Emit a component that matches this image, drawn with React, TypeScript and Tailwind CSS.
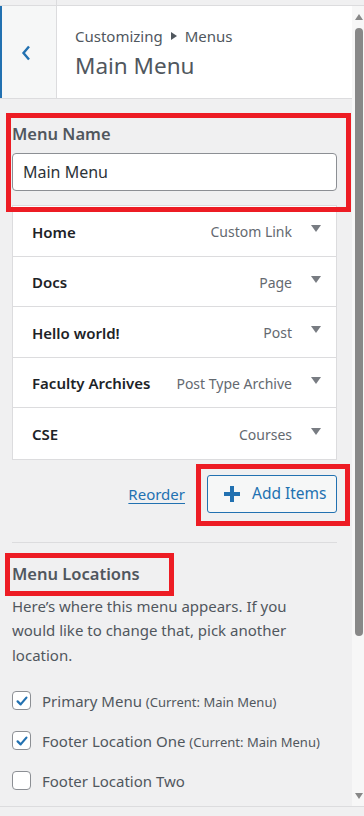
import React from "react";

const items = [
  { title: "Home", type: "Custom Link" },
  { title: "Docs", type: "Page" },
  { title: "Hello world!", type: "Post" },
  { title: "Faculty Archives", type: "Post Type Archive" },
  { title: "CSE", type: "Courses" },
];

function Check({ checked }: { checked: boolean }) {
  return (
    <span className="w-[19px] h-[19px] rounded-[4px] border border-[#8c8f94] bg-white flex items-center justify-center shrink-0">
      {checked && (
        <svg width="16" height="16" viewBox="0 0 20 20">
          <path d="M4.5 10.5 L8.3 14.2 L15.5 5.8" fill="none" stroke="#2271b1" strokeWidth="2.8" strokeLinecap="round" strokeLinejoin="round" />
        </svg>
      )}
    </span>
  );
}

export default function App() {
  return (
    <div
      className="w-[364px] h-[816px] bg-[#f0f0f1] flex flex-col overflow-hidden relative"
      style={{ fontFamily: '"Noto Sans", "Open Sans", sans-serif' }}
    >
      {/* top strip */}
      <div className="h-[6px] shrink-0 border-b border-[#dcdcde] flex">
        <div className="w-[57px] border-r border-[#dcdcde]" />
      </div>

      {/* middle */}
      <div className="h-[800px] shrink-0 flex">
        <div className="w-[352px] flex flex-col">
          {/* header */}
          <div className="h-[93px] shrink-0 bg-white border-b border-[#dcdcde] flex">
            <div className="w-[57px] shrink-0 bg-[#f6f7f7] border-l-[2px] border-l-[#2271b1] border-r border-r-[#dcdcde] flex items-center justify-center pr-[6px] pt-[1px]">
              <svg width="12" height="16" viewBox="0 0 12 16">
                <path d="M9 1.5 L3.5 8 L9 14.5" fill="none" stroke="#2271b1" strokeWidth="2.4" strokeLinejoin="miter" />
              </svg>
            </div>
            <div className="flex flex-col pl-[18px] pt-[19px]">
              <div className="text-[15px] leading-[22px] text-[#50575e] flex items-center">
                Customizing
                <svg width="6" height="8" viewBox="0 0 6 8" className="mx-[8px]">
                  <path d="M0 0 L6 4 L0 8 Z" fill="#50575e" />
                </svg>
                Menus
              </div>
              <div className="text-[22.5px] leading-[30px] mt-[4px] font-normal text-[#50575e]">Main Menu</div>
            </div>
          </div>

          {/* body */}
          <div className="pl-[12px] pr-[15px] flex flex-col">
            <div className="mt-[24px] text-[16.5px] leading-[22px] font-semibold text-[#50575e]">Menu Name</div>
            <div className="mt-[8px] h-[38px] rounded-[4px] border border-[#8c8f94] bg-white flex items-center px-[10px] text-[16px] text-[#2c3338]">
              Main Menu
            </div>

            <div className="mt-[14px] bg-white border border-[#dcdcde] flex flex-col">
              {items.map((it, i) => (
                <div
                  key={it.title}
                  className={`h-[50.6px] flex items-center pl-[19px] pr-[15px] pt-[2px] ${i < items.length - 1 ? "border-b border-[#dcdcde]" : ""}`}
                >
                  <span className="text-[15px] font-semibold text-[#1d2327] flex-1">{it.title}</span>
                  <span className="text-[14px] text-[#646970]">{it.type}</span>
                  <svg width="10" height="7" viewBox="0 0 10 7" className="ml-[19px] mb-[6px]">
                    <path d="M0 0 L10 0 L5 7 Z" fill="#787c82" />
                  </svg>
                </div>
              ))}
            </div>

            <div className="mt-[15px] flex items-center justify-end gap-[22px]">
              <span className="text-[15px] text-[#2271b1] underline underline-offset-[3px]">Reorder</span>
              <div className="h-[38px] w-[130px] rounded-[3px] border border-[#2271b1] bg-[#f6f7f7] flex items-center pl-[15px] text-[15.5px] text-[#2271b1]">
                <svg width="18" height="18" viewBox="0 0 18 18" className="mr-[11px]">
                  <path d="M7 1 H11 V7 H17 V11 H11 V17 H7 V11 H1 V7 H7 Z" fill="#2271b1" />
                </svg>
                Add Items
              </div>
            </div>

            <div className="mt-[29px] h-px bg-[#dcdcde]" />

            <div className="mt-[20px] text-[16.5px] leading-[22px] font-semibold text-[#50575e]">Menu Locations</div>
            <div className="mt-[9px] text-[15px] leading-[24.5px] text-[#50575e] pr-[20px]">
              Here’s where this menu appears. If you would like to change that, pick another location.
            </div>

            <div className="mt-[24px] flex flex-col gap-[21px]">
              <div className="flex items-center h-[19px]">
                <Check checked />
                <span className="ml-[11px] text-[15px] text-[#50575e]">
                  Primary Menu <span className="text-[13px]">(Current: Main Menu)</span>
                </span>
              </div>
              <div className="flex items-center h-[19px]">
                <Check checked />
                <span className="ml-[11px] text-[15px] text-[#50575e]">
                  Footer Location One <span className="text-[13px]">(Current: Main Menu)</span>
                </span>
              </div>
              <div className="flex items-center h-[19px]">
                <Check checked={false} />
                <span className="ml-[11px] text-[15px] text-[#50575e]">Footer Location Two</span>
              </div>
            </div>
          </div>
        </div>

        {/* scrollbar */}
        <div className="w-[12px] bg-[#f7f7f7] flex flex-col items-end pr-[1px]">
          <svg width="8" height="6" viewBox="0 0 8 6" className="mt-[8px]">
            <path d="M0 6 L4 0 L8 6 Z" fill="#888" />
          </svg>
          <div className="mt-[8px] w-[8px] h-[608px] rounded-[4px] bg-[#888]" />
          <div className="flex-1" />
          <svg width="8" height="6" viewBox="0 0 8 6" className="mb-[7px]">
            <path d="M0 0 L8 0 L4 6 Z" fill="#888" />
          </svg>
        </div>
      </div>

      {/* bottom */}
      <div className="flex-1 border-t border-[#dcdcde]" />

      {/* red annotation boxes */}
      <div className="absolute left-[6px] top-[113px] w-[345px] h-[99px] border-[5px] border-[#ed1c24]" />
      <div className="absolute left-[196px] top-[464px] w-[154px] h-[62px] border-[5px] border-[#ed1c24]" />
      <div className="absolute left-[5px] top-[553px] w-[169px] h-[43px] border-[5px] border-[#ed1c24]" />
    </div>
  );
}
